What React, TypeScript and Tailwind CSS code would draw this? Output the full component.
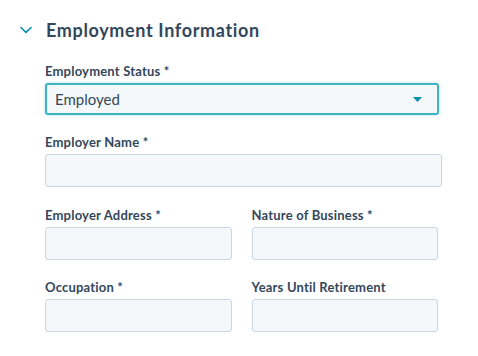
// Employment information form section

const FONT = "font-['Lato','Liberation_Sans',sans-serif]"

function Label({ children }: { children: React.ReactNode }) {
  return (
    <label className="block text-[13px] leading-[16px] font-bold tracking-[0.2px] text-[#33475b] mb-[4px]">
      {children}
    </label>
  )
}

function TextInput() {
  return (
    <input
      type="text"
      className="block w-full h-[33px] rounded-[3px] border border-[#cbd6e2] bg-[#f5f8fa] px-[10px] text-[15px] text-[#33475b] outline-none"
    />
  )
}

export default function App() {
  return (
    <div className={`${FONT} w-[478px] h-[356px] bg-white text-[#33475b] overflow-hidden`}>
      <header className="flex items-center h-[60px] pl-[20px]">
        <svg width="12" height="8" viewBox="0 0 12 8" className="mr-[14px]">
          <path d="M1 1.5 L6 6.5 L11 1.5" fill="none" stroke="#0091ae" strokeWidth="1.6" strokeLinecap="round" strokeLinejoin="round" />
        </svg>
        <h2 className="text-[18px] font-bold tracking-[0.65px] text-[#33475b]">Employment Information</h2>
      </header>

      <div className="pl-[45px] pt-[3px] flex flex-col">
        <div className="w-[394px]">
          <Label>Employment Status *</Label>
          <div className="flex items-center justify-between h-[32px] rounded-[3px] border-2 border-[#3db5c7] bg-[#f5f8fa] pl-[8px] pr-[15px] shadow-[0_0_3px_rgba(0,164,189,0.35)]">
            <span className="text-[15px] text-[#33475b]">Employed</span>
            <svg width="9" height="5" viewBox="0 0 9 5">
              <path d="M0 0 L9 0 L4.5 5 Z" fill="#0091ae" />
            </svg>
          </div>
        </div>

        <div className="w-[397px] mt-[19px]">
          <Label>Employer Name *</Label>
          <TextInput />
        </div>

        <div className="grid grid-cols-2 gap-x-[20px] w-[393px] mt-[20px]">
          <div>
            <Label>Employer Address *</Label>
            <TextInput />
          </div>
          <div>
            <Label>Nature of Business *</Label>
            <TextInput />
          </div>
        </div>

        <div className="grid grid-cols-2 gap-x-[20px] w-[393px] mt-[19px]">
          <div>
            <Label>Occupation *</Label>
            <TextInput />
          </div>
          <div>
            <Label>Years Until Retirement</Label>
            <TextInput />
          </div>
        </div>
      </div>
    </div>
  )
}
